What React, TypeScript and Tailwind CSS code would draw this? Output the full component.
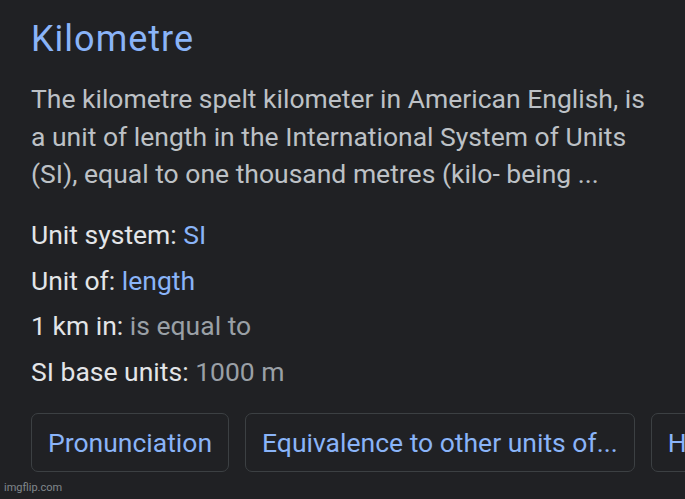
export default function App() {
  const facts = [
    { label: 'Unit system:', value: 'SI', link: true },
    { label: 'Unit of:', value: 'length', link: true },
    { label: '1 km in:', value: 'is equal to', link: false },
    { label: 'SI base units:', value: '1000 m', link: false },
  ];
  const chips = ['Pronunciation', 'Equivalence to other units of...', 'History'];

  return (
    <div className="relative w-[685px] h-[499px] overflow-hidden bg-[#202124] font-['Roboto',sans-serif]">
      <div className="pl-[31px] pt-[17px]">
        <h1 className="text-[36px] leading-[44px] tracking-[1px] text-[#8ab4f8]">Kilometre</h1>
        <p className="mt-[19px] w-[625px] text-[26.5px] leading-[37.5px] text-[#bdc1c6]">
          The kilometre spelt kilometer in American English, is a unit of length in the International System of Units
          (SI), equal to one thousand metres (kilo- being ...
        </p>
        <div className="mt-[19.5px] flex flex-col">
          {facts.map((f) => (
            <div key={f.label} className="h-[45.5px] text-[26.5px] leading-[45.5px] text-[#e3e5e8]">
              {f.label}{' '}
              <span className={f.link ? 'text-[#8ab4f8]' : 'text-[#9aa0a6]'}>{f.value}</span>
            </div>
          ))}
        </div>
        <div className="mt-[19px] flex gap-[16px] whitespace-nowrap">
          {chips.map((c) => (
            <div
              key={c}
              className="h-[59px] shrink-0 rounded-[7px] border border-[#3c4043] px-[16px] flex items-center text-[26.5px] text-[#8ab4f8]"
            >
              {c}
            </div>
          ))}
        </div>
      </div>
      <div className="absolute left-[4px] bottom-[3px] text-[11px] text-[#9aa0a6] opacity-80">imgflip.com</div>
    </div>
  );
}
